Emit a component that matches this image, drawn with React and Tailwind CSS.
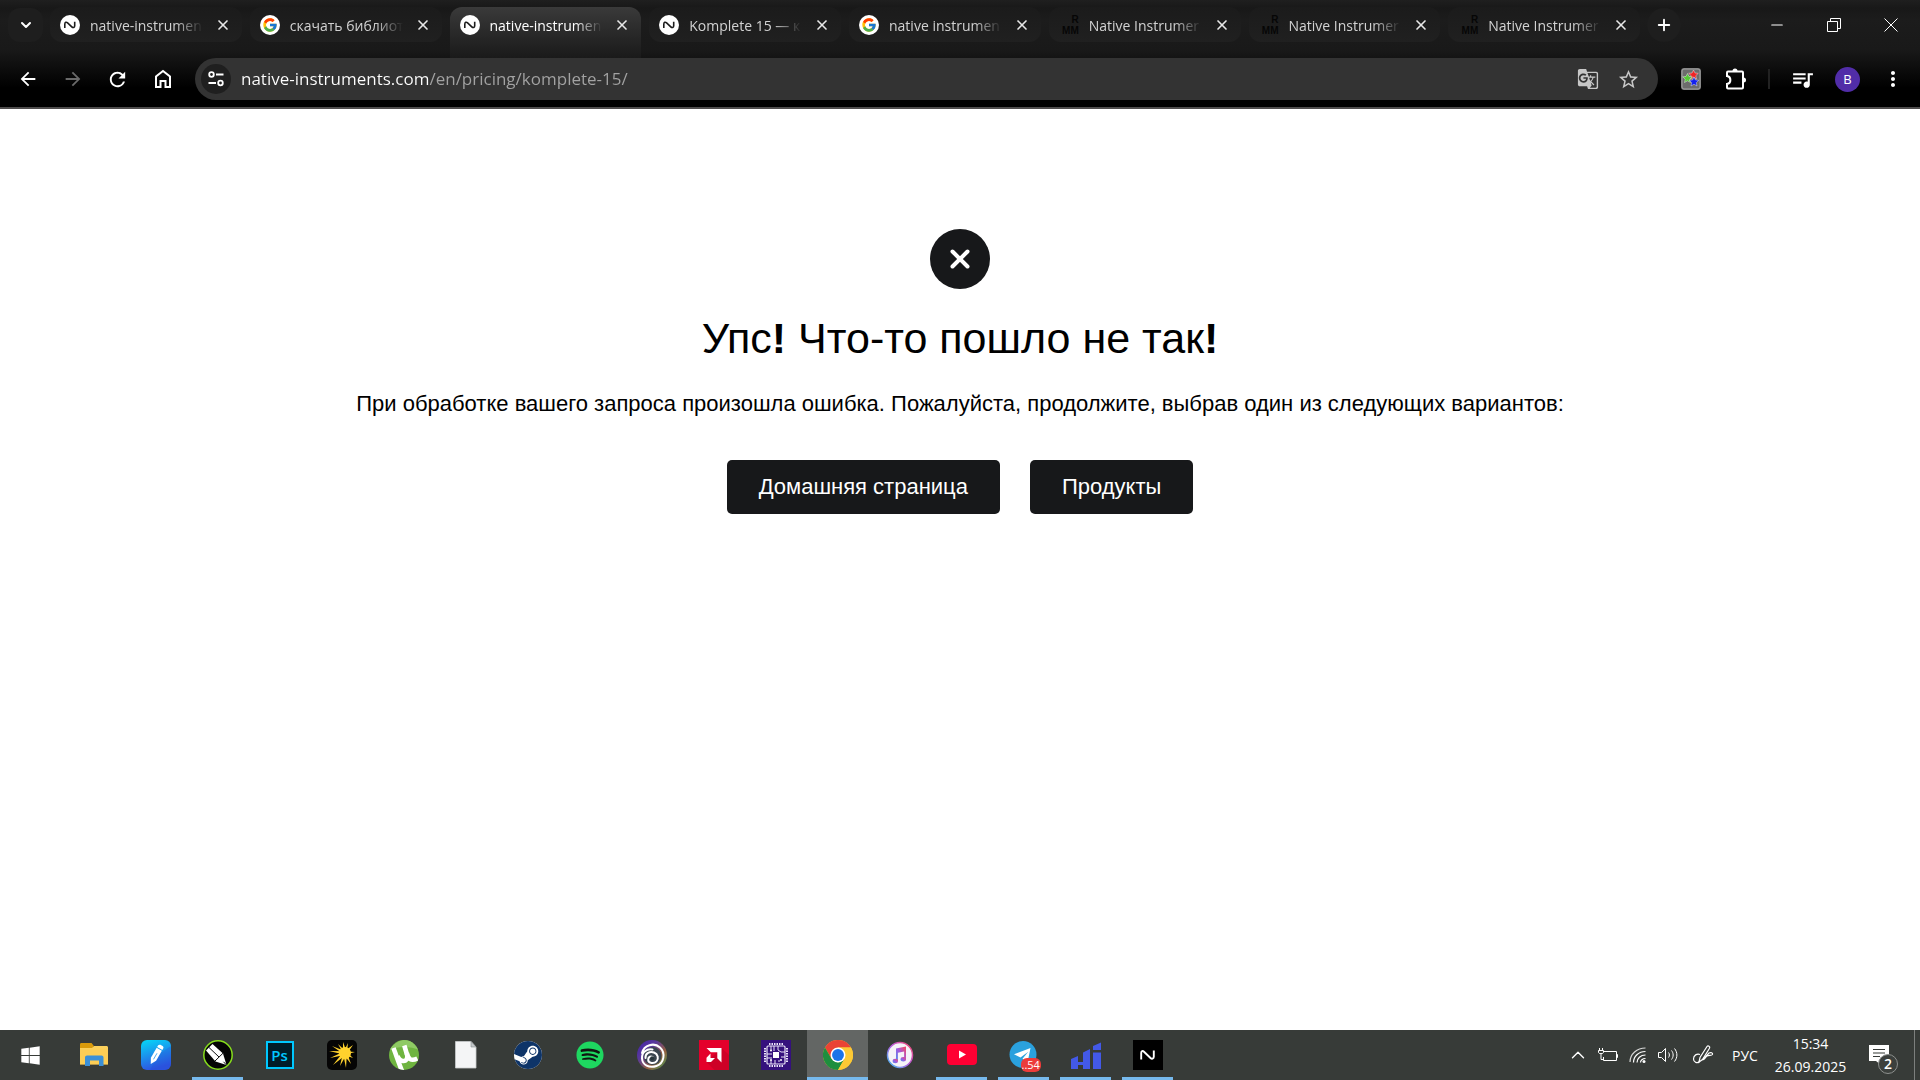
import { ChevronDown, ChevronUp, Plus, X, Minus } from 'lucide-react';
import { FcGoogle } from 'react-icons/fc';
import { FaSpotify, FaSteam, FaWindows } from 'react-icons/fa';
import {
  MdArrowBack,
  MdArrowForward,
  MdGTranslate,
  MdMoreVert,
  MdOutlineQueueMusic,
  MdRefresh,
  MdStarBorder,
} from 'react-icons/md';

/* ---------- favicons ---------- */

const NiFavicon = () => (
  <svg viewBox="0 0 20 20" className="w-5 h-5 shrink-0">
    <circle cx="10" cy="10" r="10" fill="#fff" />
    <path
      d="M4.800 13V9.200c0-2 1.500-2.500 2.800-1.300l4.200 4c1.300 1.200 2.900.7 2.900-1.200V6.800"
      fill="none"
      stroke="#1c1c1c"
      strokeWidth="1.600"
    />
  </svg>
);

const GoogleFavicon = () => (
  <span className="w-5 h-5 shrink-0 rounded-full bg-white flex items-center justify-center">
    <FcGoogle className="w-4 h-4" />
  </span>
);

const RmmFavicon = () => (
  <span className="w-5 h-5 shrink-0 flex flex-col items-end justify-center font-['Liberation_Sans',sans-serif] text-[10px] leading-[11px] font-bold text-[#060606]">
    <span>R</span>
    <span>MM</span>
  </span>
);

/* ---------- taskbar icons ---------- */

const ExplorerIcon = () => (
  <svg viewBox="0 0 30 30" className="w-[30px] h-[30px]">
    <path d="M1 4.500c0-.8.500-1.500 1.300-1.500h10.200l2 2.500V9H1z" fill="#d99a0b" />
    <path d="M1 8h12l2-2h12.500c.8 0 1.500.6 1.500 1.400V24.500H1z" fill="#fbd05b" />
    <path d="M1 9.500h28v15H1z" fill="#fdc94f" opacity=".5" />
    <path d="M6 26V17.500c0-1.100.9-2 2-2h14.500c1.100 0 2 .9 2 2V26H20v-5.500h-9V26z" fill="#3b8fd6" />
  </svg>
);

const PencilAppIcon = () => (
  <svg viewBox="0 0 30 30" className="w-[30px] h-[30px]">
    <defs>
      <linearGradient id="pencil-bg" x1="0" y1="0" x2="0.300" y2="1">
        <stop offset="0" stopColor="#05d9f8" />
        <stop offset="1" stopColor="#2d56e2" />
      </linearGradient>
    </defs>
    <rect width="30" height="30" rx="6" fill="url(#pencil-bg)" />
    <path d="M18 14 30 6v18c0 3-3 6-6 6H9z" fill="#2348cf" opacity=".25" />
    <g transform="rotate(30 15 15)" fill="#fff">
      <path d="M12 8.500h6V20L15 25.500 12 20z" />
      <path d="M12 7.500V5.800c0-1.100.9-1.800 1.800-1.800h2.400c1 0 1.800.7 1.800 1.800v1.700z" />
      <path d="M15 13v7" stroke="#3aa0ee" strokeWidth=".8" />
    </g>
  </svg>
);

const CorelIcon = () => (
  <svg viewBox="0 0 30 30" className="w-[30px] h-[30px]">
    <circle cx="15" cy="15" r="14.200" fill="#050505" stroke="#86dd1c" strokeWidth="1.500" />
    <path d="M3 10.500 9.500 4 20 13.500 23.500 25 12.500 21.500z" fill="#fff" />
    <path d="M12 21 20 13.200M20.500 21.800 23.500 25M6 7.500l10 9.500" stroke="#111" strokeWidth="1" />
  </svg>
);

const PhotoshopIcon = () => (
  <span className="w-7 h-7 border-2 border-[#00c8ff] bg-[#001d29] text-[#00c8ff] text-[15px] leading-none font-semibold flex items-center justify-center">
    Ps
  </span>
);

const burstRays = [
  [16, 2, 2], [21, 3, 1.8], [26, 5, 2], [28, 12, 1.8], [26, 18, 2], [24, 24, 2],
  [19, 28, 2], [13, 26, 2], [6, 25, 2], [3, 18, 1.8], [2, 11, 1.8], [5, 6, 1.8], [11, 4, 1.8],
];

const BurstIcon = () => (
  <svg viewBox="0 0 30 30" className="w-[30px] h-[30px]">
    <rect width="30" height="30" rx="5" fill="#050505" />
    <circle cx="18" cy="13" r="6" fill="#ffd22e" />
    {burstRays.map(([x, y, w]) => {
      const dx = x - 18;
      const dy = y - 13;
      const len = Math.hypot(dx, dy);
      const nx = (-dy / len) * w;
      const ny = (dx / len) * w;
      return (
        <polygon
          key={`${x}-${y}`}
          points={`${x},${y} ${18 + nx},${13 + ny} ${18 - nx},${13 - ny}`}
          fill="#ffd22e"
        />
      );
    })}
  </svg>
);

const TorrentIcon = () => (
  <svg viewBox="0 0 30 30" className="w-[30px] h-[30px]">
    <defs>
      <clipPath id="torrent-clip">
        <circle cx="15" cy="15" r="15" />
      </clipPath>
    </defs>
    <g clipPath="url(#torrent-clip)">
      <rect width="30" height="30" fill="#6fb440" />
      <path d="M0 10C6 2 13-1 18 0c7 1 11 6 12 10-8-4-21-4-30 0z" fill="#8fca64" />
      <g fill="none" stroke="#fff" strokeWidth="4.600">
        <path d="M4.500 8c2 5.500 4.800 14 8.500 23" />
        <path d="M8.500 16c2.500 7 10.500 6.500 9.800-.5L15.300 5.500" />
        <path d="M17.800 13c1 6 4.200 8.500 10.500 5.500" />
      </g>
    </g>
  </svg>
);

const FileIcon = () => (
  <svg viewBox="0 0 30 30" className="w-[30px] h-[30px]">
    <path d="M4.500 1.500H20l5 5.500v21H4.500z" fill="#f4f5f6" stroke="#c9cccd" strokeWidth=".8" />
    <path d="M20 1.500 25 7h-5z" fill="#c4c8ca" stroke="#8b9092" strokeWidth=".6" />
  </svg>
);

const SteamIcon = () => (
  <span className="w-7 h-7 rounded-full bg-white flex items-center justify-center overflow-hidden">
    <FaSteam className="w-[30px] h-[30px] shrink-0 text-[#0e3468]" />
  </span>
);

const SpotifyIcon = () => (
  <span className="w-[26px] h-[26px] rounded-full bg-[#101612] flex items-center justify-center">
    <FaSpotify className="w-7 h-7 shrink-0 text-[#1ed760]" />
  </span>
);

const UbisoftIcon = () => (
  <svg viewBox="0 0 30 30" className="w-[30px] h-[30px]">
    <defs>
      <linearGradient id="ubi-bg" x1="0" y1="0" x2="1" y2="1">
        <stop offset="0" stopColor="#3f1fa8" />
        <stop offset=".35" stopColor="#5b3a9c" />
        <stop offset=".65" stopColor="#96603f" />
        <stop offset="1" stopColor="#3f9f55" />
      </linearGradient>
    </defs>
    <circle cx="15" cy="15" r="15" fill="url(#ubi-bg)" />
    <circle cx="15.500" cy="16" r="9" fill="#3a4650" />
    <g fill="none" stroke="#fff" strokeLinecap="round">
      <path d="M5 13C7 5 17 2 23 7.500s4 16-3.500 18.500S5.500 25 5 18.500 10 8.500 15.500 9.500" strokeWidth="2" />
      <path d="M8.500 18c-.5-5 4.500-7 8.500-5.500s5 6 2.500 8.800-8 2-8.300-1.200 2.300-4.300 4.300-3.300" strokeWidth="2" />
    </g>
    <circle cx="15.200" cy="18.300" r="2" fill="#27363c" />
  </svg>
);

const AmdIcon = () => (
  <svg viewBox="0 0 30 30" className="w-[30px] h-[30px]">
    <rect width="30" height="30" fill="#e4002b" />
    <path d="M22.500 8 30 15v15H15.500l-8-8z" fill="#b80022" opacity=".5" />
    <path d="M7.500 8h15v14.500l-4.200-4.200v-6h-6.500z" fill="#fff" />
    <path d="M11.500 13.500 7.500 17.700V22H12l4-4h-4.500z" fill="#fff" />
  </svg>
);

const CpuIcon = () => (
  <svg viewBox="0 0 30 30" className="w-[30px] h-[30px]">
    <rect width="30" height="30" fill="#35117d" />
    <g fill="none" stroke="#e9e3f7">
      <rect x="6" y="6" width="18" height="18" rx="1" strokeWidth="1.200" />
      <path d="M8 4h14M8 26h14" strokeWidth="2" strokeDasharray="1.500 1" />
      <path d="M4 8v14M26 8v14" strokeWidth="2" strokeDasharray="1.500 1" />
      <path d="M10 6v5M13 6v5M17 6v4l3 2h4M6 14h5M6 18h5M10 24v-4M14 20v4M18 20v2M20 17h4" strokeWidth="1" />
    </g>
    <rect x="12" y="12" width="6" height="6" fill="#fff" />
    <g fill="#fff">
      <circle cx="10" cy="10.500" r="1" />
      <circle cx="20" cy="20" r="1" />
      <circle cx="10" cy="20" r="1" />
    </g>
  </svg>
);

const ChromeIcon = () => (
  <svg viewBox="0 0 48 48" className="w-[30px] h-[30px]">
    <circle cx="24" cy="24" r="24" fill="#fcc934" />
    <path d="M24 12h20.800A24 24 0 0 0 3.200 12l10.400 18z" fill="#ea4335" />
    <path d="M3.200 12A24 24 0 0 0 24 48l10.400-18L24 36l-10.400-6z" fill="#1e8e3e" />
    <path d="M24 12h20.800A24 24 0 0 1 24 48l10.400-18z" fill="#fcc934" />
    <circle cx="24" cy="24" r="12" fill="#fff" />
    <circle cx="24" cy="24" r="9.500" fill="#1a73e8" />
  </svg>
);

const ItunesIcon = () => (
  <svg viewBox="0 0 28 28" className="w-7 h-7">
    <defs>
      <linearGradient id="itunes-ring" x1="0" y1="1" x2="1" y2="0">
        <stop offset="0" stopColor="#37c6f2" />
        <stop offset=".5" stopColor="#b45be0" />
        <stop offset="1" stopColor="#fb4a6a" />
      </linearGradient>
      <linearGradient id="itunes-note" x1="0" y1="1" x2="1" y2="0">
        <stop offset="0" stopColor="#4b8ff0" />
        <stop offset=".5" stopColor="#a259dd" />
        <stop offset="1" stopColor="#fc4658" />
      </linearGradient>
    </defs>
    <circle cx="14" cy="14" r="12.500" fill="#f5f3f8" stroke="url(#itunes-ring)" strokeWidth="1.500" />
    <g fill="url(#itunes-note)">
      <path d="M10 7.500 20 5.500V18h-1.900v-7.500l-6.200 1.300V20H10z" />
      <ellipse cx="9.300" cy="20" rx="2.700" ry="2.200" />
      <ellipse cx="17.300" cy="18.300" rx="2.700" ry="2.200" />
    </g>
  </svg>
);

const YoutubeIcon = () => (
  <svg viewBox="0 0 30 22" className="w-[30px] h-[22px]">
    <rect width="30" height="21" rx="4" fill="#ff0033" />
    <path d="M12 6.500v8l7-4z" fill="#fff" />
  </svg>
);

const TelegramIcon = () => (
  <span className="relative w-[30px] h-[30px]">
    <svg viewBox="0 0 30 30" className="w-[30px] h-[30px]">
      <circle cx="14" cy="14.500" r="13.500" fill="#2aa1de" />
      <path d="M5 14.200 21.500 8 18.500 22.500l-5-3.700 5.800-7-7.800 5.700z" fill="#fff" />
    </svg>
    <span className="absolute left-[12px] top-[18px] h-[14px] px-px rounded-md bg-[#ec3b3b] text-white text-[11px] leading-[14px]">
      ..54
    </span>
  </span>
);

const HiIcon = () => (
  <svg viewBox="0 0 30 30" className="w-[30px] h-[30px]">
    <g fill="#4359e8">
      <path d="M0 19 7 16v6h5v-9.500L19 9v20h-7v-4H7v4H0z" />
      <path d="M22 12.500h8V29h-8z" />
      <path d="M22 6 30 2.500V10h-8z" />
    </g>
  </svg>
);

const NativeAccessIcon = () => (
  <svg viewBox="0 0 30 30" className="w-[30px] h-[30px]">
    <rect width="30" height="30" fill="#000" />
    <path
      d="M8.200 19.500v-6.500c0-2 1.500-2.500 2.800-1.300l6.500 6.300c1.300 1.200 3.300.8 3.300-1.200V10.500"
      fill="none"
      stroke="#fff"
      strokeWidth="1.900"
    />
  </svg>
);

/* ---------- tray icons ---------- */

const BatteryIcon = () => (
  <svg viewBox="0 0 20 16" className="w-5 h-4" fill="none" stroke="#fff" strokeWidth="1">
    <path d="M6 4.500h12.500v9H5.500V10M18.500 7.500h1v3h-1" />
    <path d="M1.500 1v3M4.500 1v3M.5 3.500h5v2c0 1.500-5 1.500-5 0zM3 7v5.500h2.500" />
  </svg>
);

const WifiIcon = () => (
  <svg viewBox="0 0 18 18" className="w-[18px] h-[18px]" fill="none" stroke="#fff" strokeWidth="1.200">
    <path d="M1 16C1 8 8 2 16.500 2" opacity=".8" />
    <path d="M4.500 16.500c0-6 5-11 12-11" />
    <path d="M8 16.500c0-4 3.500-7.500 8.500-7.500" />
    <path d="M11.500 16.500c0-2 2-4 5-4" />
    <circle cx="15" cy="15.500" r="1.500" fill="#fff" stroke="none" />
  </svg>
);

const VolumeIcon = () => (
  <svg viewBox="0 0 20 16" className="w-5 h-4" fill="none" stroke="#fff" strokeWidth="1">
    <path d="M.5 5.500h3l4-4v13l-4-4h-3z" />
    <path d="M10.500 5.500c1.200 1.500 1.200 3.500 0 5M13.500 3.500c2.200 2.700 2.200 6.300 0 9M16.500 1.500c3.200 4 3.200 9 0 13" />
  </svg>
);

const PenIcon = () => (
  <svg viewBox="0 0 22 22" className="w-[22px] h-[22px]" fill="none" stroke="#fff" strokeWidth="1.200">
    <path d="M7 18 8 13.500 15 2.500c1-1.500 3.500 0 2.500 1.700L10.500 15.500z" />
    <path d="M8 10.500c-3-1-6.500.5-6.500 4.500 0 3.500 4 4.500 6 2.500M11 15.500l6-6.500c2-1 4 0 3.500 1.500-1 1.500-3 .5-5.500 1.500-1.500 1-2 3-4.500 4" />
  </svg>
);

const NotificationIcon = () => (
  <span className="relative w-[30px] h-[30px]">
    <svg viewBox="0 0 30 30" className="w-[30px] h-[30px]">
      <path d="M0 5h20v16h-8v4l-5-4H0z" fill="#fff" />
      <path d="M4 9.500h12M4 13h12M4 16.500h7" stroke="#363a37" strokeWidth="1.200" />
    </svg>
    <span className="absolute left-[9px] top-[14px] w-5 h-5 rounded-full border border-[#8d908e] bg-[#3c403d] text-white text-[14px] leading-[18px] font-semibold text-center">
      2
    </span>
  </span>
);

const tabs = [
  { title: 'native-instrumen', Icon: NiFavicon },
  { title: 'скачать библиот', Icon: GoogleFavicon },
  { title: 'native-instrumen', Icon: NiFavicon, active: true },
  { title: 'Komplete 15 — к', Icon: NiFavicon },
  { title: 'native instrumen', Icon: GoogleFavicon },
  { title: 'Native Instrumer', Icon: RmmFavicon },
  { title: 'Native Instrumer', Icon: RmmFavicon },
  { title: 'Native Instrumer', Icon: RmmFavicon },
];

const apps = [
  { name: 'Explorer', Icon: ExplorerIcon },
  { name: 'Notes', Icon: PencilAppIcon },
  { name: 'CorelDRAW', Icon: CorelIcon, open: true },
  { name: 'Photoshop', Icon: PhotoshopIcon },
  { name: 'Burst', Icon: BurstIcon },
  { name: 'uTorrent', Icon: TorrentIcon },
  { name: 'File', Icon: FileIcon },
  { name: 'Steam', Icon: SteamIcon },
  { name: 'Spotify', Icon: SpotifyIcon },
  { name: 'Ubisoft', Icon: UbisoftIcon },
  { name: 'AMD', Icon: AmdIcon },
  { name: 'CPU-Z', Icon: CpuIcon },
  { name: 'Chrome', Icon: ChromeIcon, active: true },
  { name: 'iTunes', Icon: ItunesIcon },
  { name: 'YouTube', Icon: YoutubeIcon, open: true },
  { name: 'Telegram', Icon: TelegramIcon, open: true },
  { name: 'HiSuite', Icon: HiIcon, open: true },
  { name: 'Native Access', Icon: NativeAccessIcon, open: true },
];

const Tab = ({ title, Icon, active }) => (
  <li
    className={`flex-1 min-w-0 flex items-start gap-[10px] pl-[10px] pr-[9px] pt-2 ${
      active
        ? 'h-[51px] rounded-t-xl bg-gradient-to-b from-[#3a3a3a] to-[#1a1a1a] text-white'
        : 'h-[35px] rounded-xl bg-gradient-to-b from-[#1b1b1b] to-[#202020] text-[#d2d2d2]'
    }`}
  >
    <Icon />
    <span className="flex-1 min-w-0 overflow-hidden whitespace-nowrap text-[14px] leading-[22px] [mask-image:linear-gradient(to_right,#000_75%,transparent)]">
      {title}
    </span>
    <button aria-label="Close tab" className="w-5 h-5 flex items-center justify-center text-[#e8e8e8]">
      <X className="w-4 h-4" strokeWidth={2.5} />
    </button>
  </li>
);

const TabStrip = () => (
  <div className="h-[58px] flex items-start">
    <button
      aria-label="Search tabs"
      className="ml-2 mr-[7px] mt-2 w-[35px] h-[34px] rounded-xl bg-[#1e1e1e] text-white flex items-center justify-center"
    >
      <ChevronDown className="w-4 h-4" strokeWidth={3} />
    </button>
    <ul className="flex-1 min-w-0 flex gap-2 pt-[7px]">
      {tabs.map((tab, i) => (
        <Tab key={i} {...tab} />
      ))}
    </ul>
    <button
      aria-label="New tab"
      className="ml-[7px] mt-2 w-[34px] h-[34px] rounded-full bg-[#1e1e1e] text-white flex items-center justify-center"
    >
      <Plus className="w-[18px] h-[18px]" strokeWidth={2.5} />
    </button>
    <div className="ml-[67px] mr-px flex text-white">
      <button aria-label="Minimize" className="w-[57px] h-[50px] flex items-center justify-center">
        <Minus className="w-[18px] h-[18px]" strokeWidth={1.5} />
      </button>
      <button aria-label="Restore" className="w-[57px] h-[50px] flex items-center justify-center">
        <svg viewBox="0 0 14 14" className="w-[14px] h-[14px]" fill="none" stroke="currentColor">
          <path d="M.5 3.500h10v10H.5zM3.500 3V.500h10v10H11" />
        </svg>
      </button>
      <button aria-label="Close" className="w-[57px] h-[50px] flex items-center justify-center">
        <svg viewBox="0 0 14 14" className="w-[14px] h-[14px]" stroke="currentColor">
          <path d="m.5.5 13 13M13.500.500l-13 13" />
        </svg>
      </button>
    </div>
  </div>
);

const ToolButton = ({ label, children }) => (
  <button aria-label={label} className="w-[45px] h-[42px] flex items-center justify-center text-white">
    {children}
  </button>
);

const Toolbar = () => (
  <div className="h-[49px] flex items-start px-[5px]">
    <ToolButton label="Back">
      <MdArrowBack className="w-[22px] h-[22px]" />
    </ToolButton>
    <ToolButton label="Forward">
      <MdArrowForward className="w-[22px] h-[22px] text-[#6a6a6a]" />
    </ToolButton>
    <ToolButton label="Reload">
      <MdRefresh className="w-[23px] h-[23px]" />
    </ToolButton>
    <ToolButton label="Home">
      <svg viewBox="0 0 18 20" className="w-[18px] h-5" fill="none" stroke="currentColor" strokeWidth="2">
        <path d="M2 18V7.500L9 2l7 5.500V18h-4.500v-6h-5v6z" />
      </svg>
    </ToolButton>
    <div className="flex-1 min-w-0 h-[42px] mx-[10px] pl-[6px] pr-[10px] rounded-full bg-[#333333] flex items-center">
      <button
        aria-label="Site information"
        className="w-[30px] h-[30px] rounded-full bg-[#1f1f1f] flex items-center justify-center"
      >
        <svg viewBox="0 0 16 16" className="w-4 h-4" fill="none" stroke="#fff" strokeWidth="1.800">
          <circle cx="3.500" cy="3.500" r="2.300" />
          <path d="M8 3.500h7.500M.5 12H8" />
          <circle cx="12.500" cy="12" r="2.300" />
        </svg>
      </button>
      <input
        aria-label="Address"
        defaultValue="native-instruments.com/en/pricing/komplete-15/"
        className="flex-1 min-w-0 ml-[10px] text-[17px] leading-6 outline-none text-transparent bg-clip-text bg-[linear-gradient(to_right,#ffffff_188px,#a3a3a3_188px)]"
      />
      <button aria-label="Translate" className="w-10 h-10 flex items-center justify-center text-[#c7c7c7]">
        <MdGTranslate className="w-[22px] h-[22px]" />
      </button>
      <button aria-label="Bookmark" className="w-10 h-10 flex items-center justify-center text-[#c7c7c7]">
        <MdStarBorder className="w-[23px] h-[23px]" />
      </button>
    </div>
    <ToolButton label="Star extension">
      <svg viewBox="0 0 20 22" className="w-5 h-[22px]">
        <rect width="20" height="22" rx="3" fill="#6c6c6c" />
        <rect x="1" y="1" width="18" height="20" rx="2" fill="none" stroke="#a5a5a5" />
        <path d="m12.500 2 1.500 3 3.300.3-2.500 2.400.7 3.300-3-1.700-3 1.700.7-3.300-2.500-2.400 3.300-.3z" fill="#f02525" stroke="#fff" strokeWidth=".4" />
        <path d="m6.500 5.500 1.500 3 3.300.3-2.500 2.400.7 3.300-3-1.700-3 1.700.7-3.300-2.500-2.400 3.300-.3z" fill="#55c834" stroke="#fff" strokeWidth=".4" />
        <path d="m13 9 1.500 3 3.300.3-2.500 2.400.7 3.300-3-1.700-3 1.700.7-3.300-2.500-2.400 3.300-.3z" fill="#1420f0" stroke="#fff" strokeWidth=".4" />
      </svg>
    </ToolButton>
    <ToolButton label="Extensions">
      <svg viewBox="0 0 22 24" className="w-[22px] h-6" fill="none" stroke="currentColor" strokeWidth="2">
        <path d="M3 4.500h14c.6 0 1 .4 1 1v15c0 .6-.4 1-1 1H3c-.6 0-1-.4-1-1V17c4.500-.5 4.500-7.500 0-8V5.500c0-.6.4-1 1-1z" />
        <path d="M7.500 4a2.500 2.500 0 0 1 5 0zM18.500 10.500a2.500 2.500 0 0 1 0 5z" fill="currentColor" stroke="none" />
      </svg>
    </ToolButton>
    <div className="w-[22px] h-[42px] flex items-center justify-center">
      <span className="w-[2px] h-5 bg-[#222222]" />
    </div>
    <ToolButton label="Media">
      <MdOutlineQueueMusic className="w-[25px] h-[25px]" />
    </ToolButton>
    <ToolButton label="Profile">
      <span className="w-[25px] h-[25px] rounded-full bg-[#512da8] text-[13px] leading-[25px]">B</span>
    </ToolButton>
    <ToolButton label="Menu">
      <MdMoreVert className="w-6 h-6" />
    </ToolButton>
  </div>
);

const ErrorPage = () => (
  <main className="flex-1 bg-white text-black flex flex-col items-center pt-[120px] px-6 font-['Liberation_Sans',Arial,sans-serif]">
    <div className="w-[60px] h-[60px] rounded-full bg-[#17181a] flex items-center justify-center">
      <svg viewBox="0 0 20 20" className="w-5 h-5" stroke="#fff" strokeWidth="4" strokeLinecap="round">
        <path d="m2.500 2.500 15 15M17.500 2.500l-15 15" />
      </svg>
    </div>
    <h1 className="mt-[23px] text-[43px] leading-[52px] text-center">
      Упс<b>!</b> Что-то пошло не так<b>!</b>
    </h1>
    <p className="mt-[25px] text-[22px] leading-[30px] text-center">
      При обработке вашего запроса произошла ошибка. Пожалуйста, продолжите, выбрав один из следующих вариантов:
    </p>
    <div className="mt-[41px] flex gap-[30px] text-[22px] leading-[30px] text-white">
      <button className="h-[54px] px-8 rounded-[5px] bg-[#17181a]">Домашняя страница</button>
      <button className="h-[54px] px-8 rounded-[5px] bg-[#17181a]">Продукты</button>
    </div>
  </main>
);

const Taskbar = () => (
  <footer className="h-[50px] bg-[#373b38] text-white flex items-stretch">
    <button aria-label="Start" className="w-[60px] flex items-center justify-center">
      <FaWindows className="w-[21px] h-[21px]" />
    </button>
    <div className="ml-[3px] flex gap-px">
      {apps.map(({ name, Icon, active, open }) => (
        <button
          key={name}
          aria-label={name}
          className={`w-[61px] flex flex-col items-center ${active ? 'bg-[#636664]' : ''}`}
        >
          <span className="h-[47px] pt-[3px] flex items-center justify-center">
            <Icon />
          </span>
          {active && <span className="w-full h-[3px] bg-[#76b9ed]" />}
          {open && <span className="w-[51px] h-[3px] bg-[#76b9ed]" />}
        </button>
      ))}
    </div>
    <div className="ml-auto flex items-center">
      <button aria-label="Show hidden icons" className="w-[30px] flex justify-center">
        <ChevronUp className="w-[22px] h-[22px]" strokeWidth={1.5} />
      </button>
      <span className="w-[30px] flex justify-center">
        <BatteryIcon />
      </span>
      <span className="w-[30px] flex justify-center">
        <WifiIcon />
      </span>
      <span className="w-[30px] flex justify-center">
        <VolumeIcon />
      </span>
      <span className="w-10 flex justify-center">
        <PenIcon />
      </span>
      <span className="w-11 text-center text-[14px] leading-[23px]">РУС</span>
      <div className="w-[87px] text-center text-[14px] leading-[23px]">
        <div>15:34</div>
        <div>26.09.2025</div>
      </div>
      <button aria-label="Notifications" className="w-[60px] h-[50px] flex items-center justify-center">
        <NotificationIcon />
      </button>
      <span className="w-[6px] h-[50px] border-l border-[#7c7f7d]" />
    </div>
  </footer>
);

const App = () => (
  <div className="min-h-screen flex flex-col bg-white font-['Open_Sans','Noto_Sans',sans-serif]">
    <header className="border-b-2 border-[#4e4c4c] bg-[linear-gradient(to_bottom,#1f1f1f_0px,#181818_8px,#1c1c1c_20px,#191919_50px,#000000_88px)]">
      <TabStrip />
      <Toolbar />
    </header>
    <ErrorPage />
    <Taskbar />
  </div>
);

export default App;
